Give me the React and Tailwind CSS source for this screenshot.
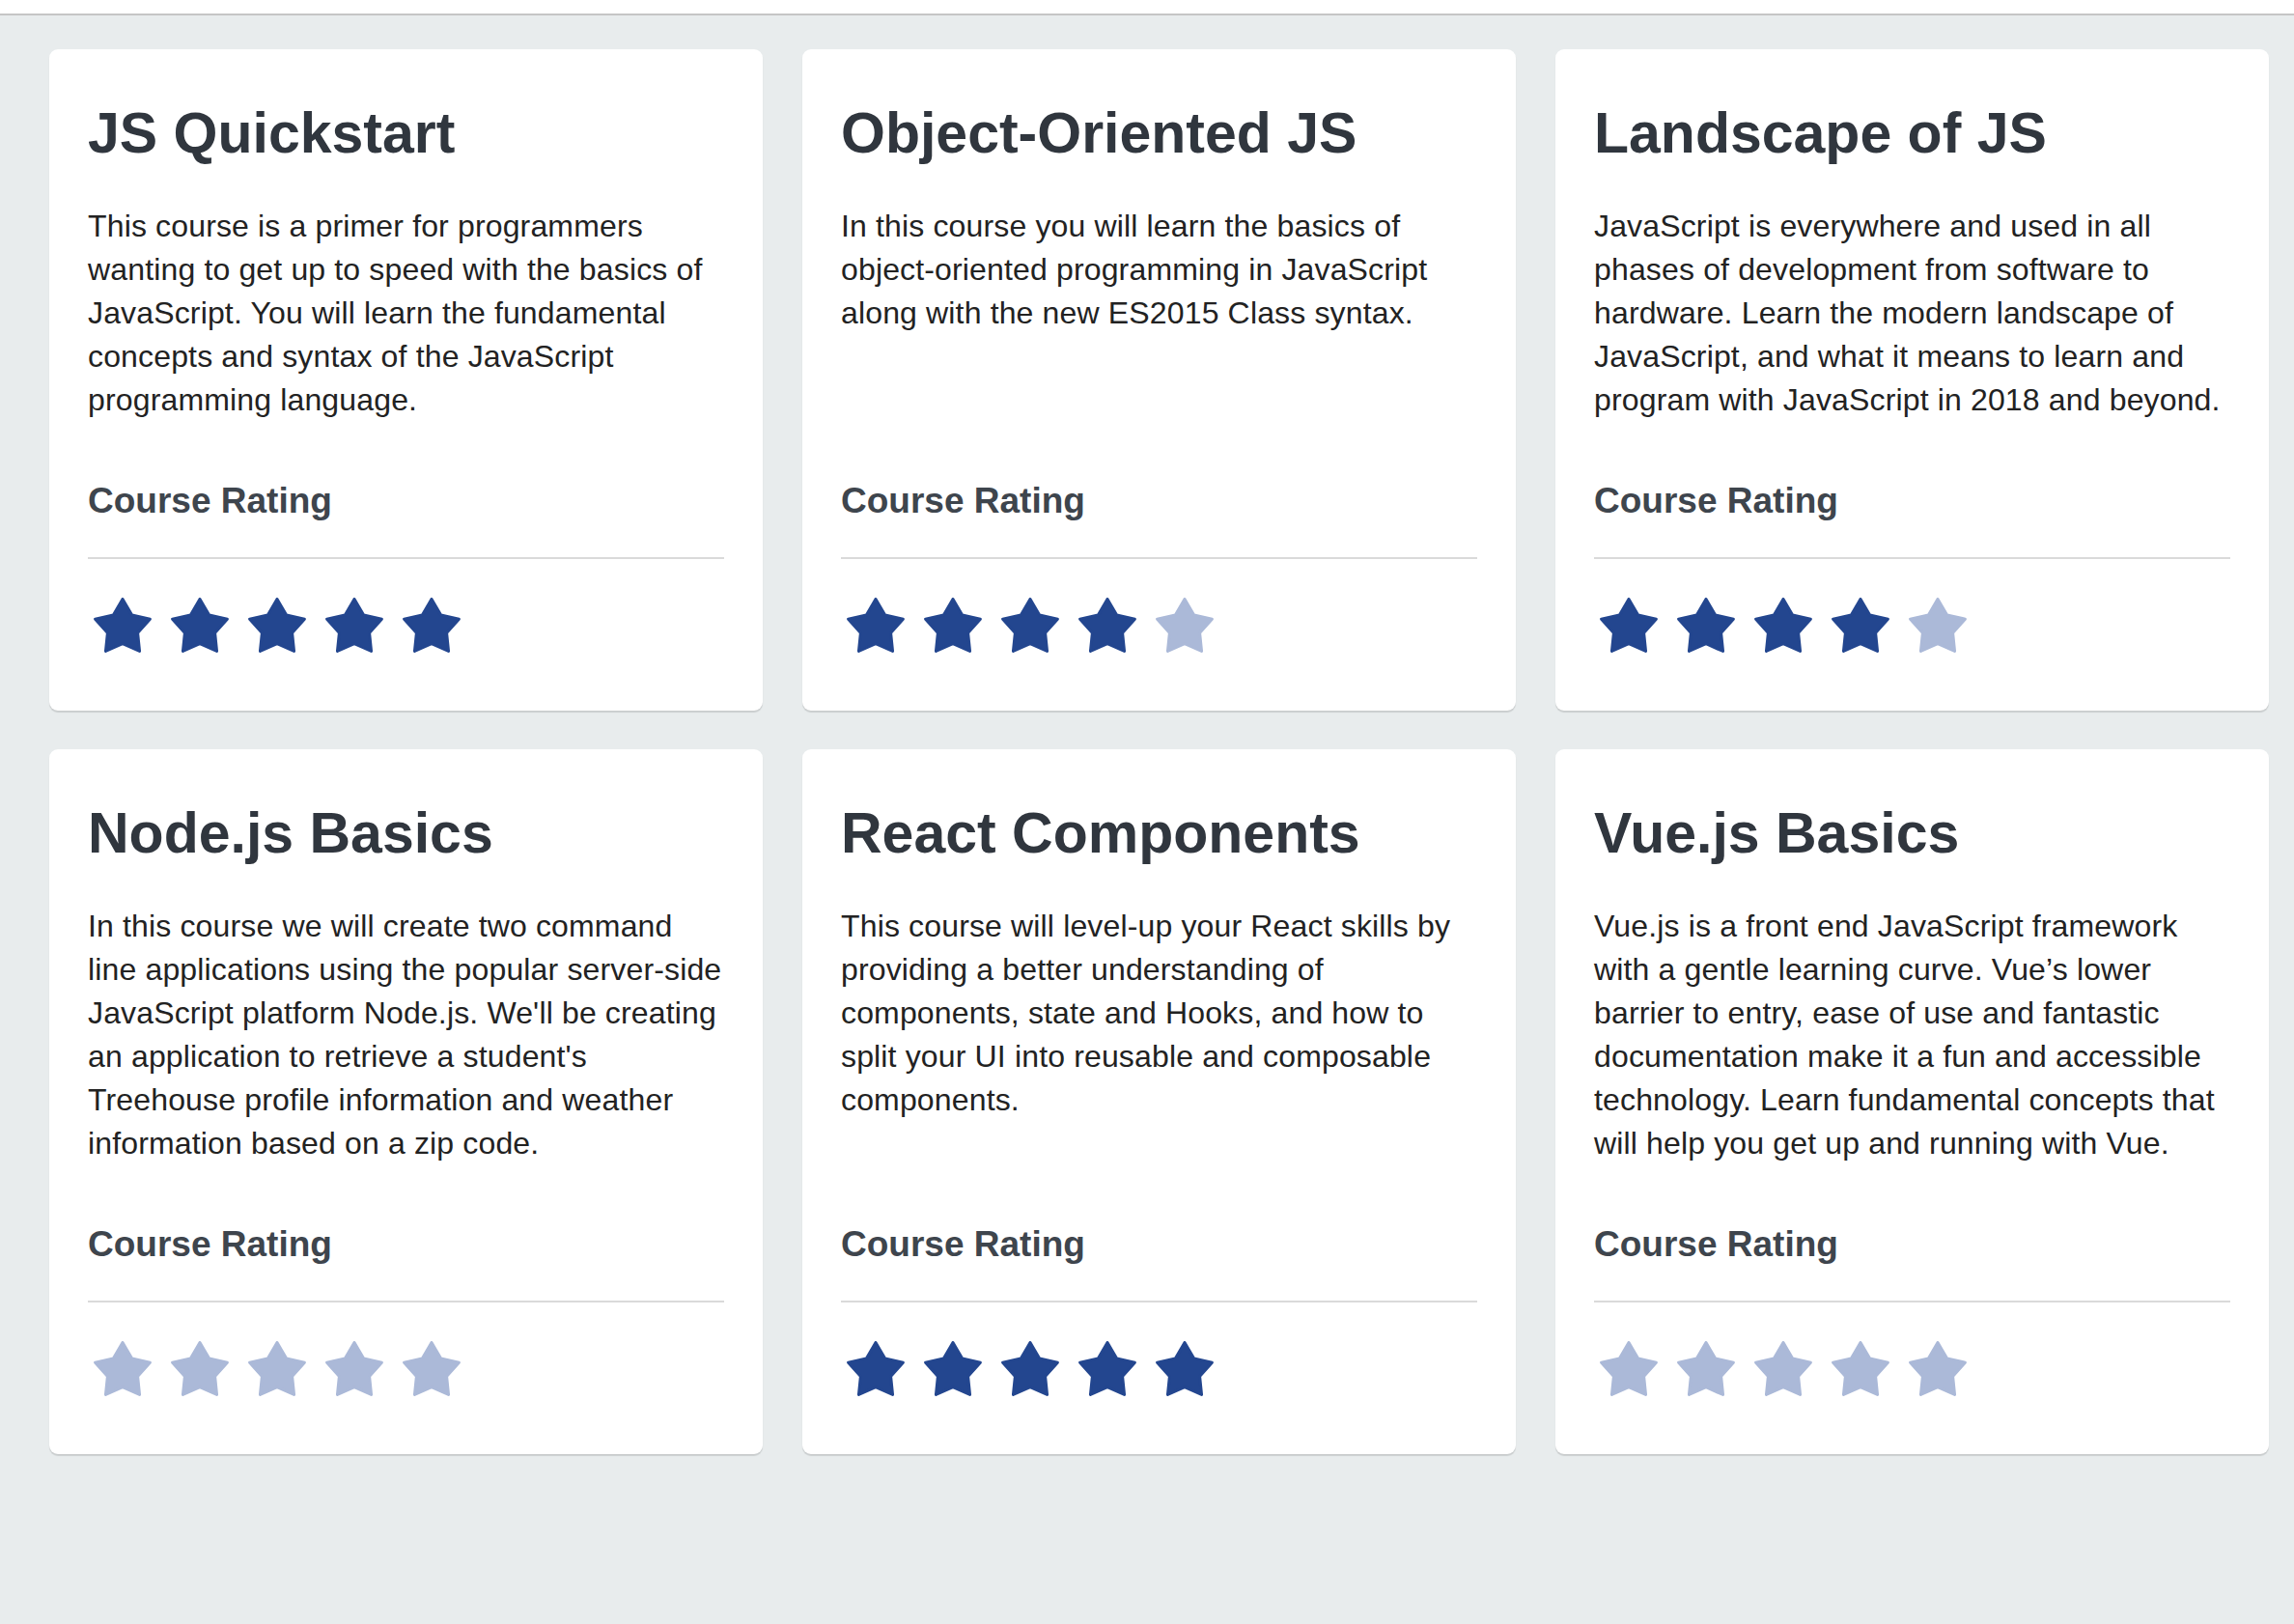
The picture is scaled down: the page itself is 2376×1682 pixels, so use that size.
import React from 'react';

const courses = [
  {
    title: 'JS Quickstart',
    text: 'This course is a primer for programmers wanting to get up to speed with the basics of JavaScript. You will learn the fundamental concepts and syntax of the JavaScript programming language.',
    rating: 5,
  },
  {
    title: 'Object-Oriented JS',
    text: 'In this course you will learn the basics of object-oriented programming in JavaScript along with the new ES2015 Class syntax.',
    rating: 4,
  },
  {
    title: 'Landscape of JS',
    text: 'JavaScript is everywhere and used in all phases of development from software to hardware. Learn the modern landscape of JavaScript, and what it means to learn and program with JavaScript in 2018 and beyond.',
    rating: 4,
  },
  {
    title: 'Node.js Basics',
    text: "In this course we will create two command line applications using the popular server-side JavaScript platform Node.js. We'll be creating an application to retrieve a student's Treehouse profile information and weather information based on a zip code.",
    rating: 0,
  },
  {
    title: 'React Components',
    text: 'This course will level-up your React skills by providing a better understanding of components, state and Hooks, and how to split your UI into reusable and composable components.',
    rating: 5,
  },
  {
    title: 'Vue.js Basics',
    text: 'Vue.js is a front end JavaScript framework with a gentle learning curve. Vue’s lower barrier to entry, ease of use and fantastic documentation make it a fun and accessible technology. Learn fundamental concepts that will help you get up and running with Vue.',
    rating: 0,
  },
];

const STAR_POINTS =
  '30,1.5 39.64,18.08 58.39,22.13 45.6,36.42 47.55,55.5 30,47.75 12.45,55.5 14.4,36.42 1.61,22.13 20.36,18.08';

const Star = ({ filled }) => {
  const color = filled ? '#23468f' : '#abb9d8';
  return (
    <svg width="60" height="57" viewBox="0 0 60 57" className="block">
      <polygon points={STAR_POINTS} fill={color} stroke={color} strokeWidth="3" strokeLinejoin="round" />
    </svg>
  );
};

const CourseCard = ({ course }) => (
  <div className="flex flex-col bg-white rounded-[9px] shadow-[0_2px_1px_rgba(0,0,0,0.13)] pt-[58px] px-[40px] pb-[60px]">
    <h3 className="text-[59px] leading-[59px] font-bold text-[#30363e]">{course.title}</h3>
    <p className="mt-[44px] mb-[63px] text-[32px] leading-[45px] tracking-[0.15px] text-[#222222]">{course.text}</p>
    <div className="mt-auto">
      <h4 className="text-[37px] leading-[38px] font-bold text-[#3e454d] pb-[39px] border-b-2 border-[#dadada]">
        Course Rating
      </h4>
      <div className="flex gap-[20px] pl-[6px] pt-[40px]">
        {[1, 2, 3, 4, 5].map((n) => (
          <Star key={n} filled={n <= course.rating} />
        ))}
      </div>
    </div>
  </div>
);

export default function App() {
  return (
    <div className="min-h-screen bg-[#e8eced] font-['Liberation_Sans',Arial,sans-serif]">
      <div className="h-[14px] bg-white border-b-2 border-[#c5c5c5] box-content" />
      <main className="grid grid-cols-3 gap-x-[41px] gap-y-[40px] pt-[35px] pl-[51px] pr-[26px] pb-[40px]">
        {courses.map((c) => (
          <CourseCard key={c.title} course={c} />
        ))}
      </main>
    </div>
  );
}
